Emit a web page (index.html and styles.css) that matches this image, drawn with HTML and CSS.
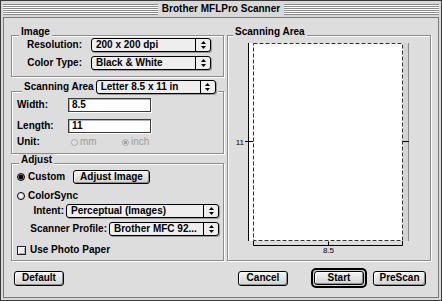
FILE: index.html
```html
<!DOCTYPE html>
<html lang="en">
<head>
    <meta charset="UTF-8">
    <title>Brother MFLPro Scanner</title>
    <link rel="stylesheet" href="styles.css">
</head>
<body>
    <div class="window">
        <div class="titlebar">
            <span class="stripes"></span>
            <span class="title">Brother MFLPro Scanner</span>
            <span class="stripes"></span>
        </div>

        <div class="content">
            <div class="main">
                <div class="left">
                    <!-- Image -->
                    <div class="group image-group">
                        <div class="legend">Image</div>
                        <div class="form-grid">
                            <span class="grid-label">Resolution:</span>
                            <div class="popup w120">
                                <span class="popup-text">200 x 200 dpi</span>
                                <span class="popup-arrows"><svg width="5" height="8" viewBox="0 0 5 8"><polygon points="0,3 2.5,0 5,3"/><polygon points="0,5 2.5,8 5,5"/></svg></span>
                            </div>
                            <span class="grid-label">Color Type:</span>
                            <div class="popup w120">
                                <span class="popup-text">Black &amp; White</span>
                                <span class="popup-arrows"><svg width="5" height="8" viewBox="0 0 5 8"><polygon points="0,3 2.5,0 5,3"/><polygon points="0,5 2.5,8 5,5"/></svg></span>
                            </div>
                        </div>
                    </div>

                    <!-- Scanning Area -->
                    <div class="group area-group">
                        <div class="legend legend-popup">
                            <span>Scanning Area</span>
                            <div class="popup w120">
                                <span class="popup-text">Letter 8.5 x 11 in</span>
                                <span class="popup-arrows"><svg width="5" height="8" viewBox="0 0 5 8"><polygon points="0,3 2.5,0 5,3"/><polygon points="0,5 2.5,8 5,5"/></svg></span>
                            </div>
                        </div>
                        <div class="row size-row">
                            <span class="size-label">Width:</span>
                            <div class="field">8.5</div>
                        </div>
                        <div class="row size-row gap7">
                            <span class="size-label">Length:</span>
                            <div class="field">11</div>
                        </div>
                        <div class="row unit-row">
                            <span class="unit-label">Unit:</span>
                            <span class="unit-opt"><span class="radio small off"></span>mm</span>
                            <span class="unit-opt"><span class="radio small off dot"></span>inch</span>
                        </div>
                    </div>

                    <!-- Adjust -->
                    <div class="group adjust-group">
                        <div class="legend">Adjust</div>
                        <div class="row adj-row1">
                            <span class="opt custom-opt"><span class="radio on"></span>Custom</span>
                            <button class="btn adjust-btn">Adjust Image</button>
                        </div>
                        <div class="row adj-row2">
                            <span class="opt"><span class="radio"></span>ColorSync</span>
                        </div>
                        <div class="row adj-row3">
                            <span class="intent-label">Intent:</span>
                            <div class="popup w153">
                                <span class="popup-text">Perceptual (Images)</span>
                                <span class="popup-arrows"><svg width="5" height="8" viewBox="0 0 5 8"><polygon points="0,3 2.5,0 5,3"/><polygon points="0,5 2.5,8 5,5"/></svg></span>
                            </div>
                        </div>
                        <div class="row adj-row4">
                            <span class="profile-label">Scanner Profile:</span>
                            <div class="popup w110">
                                <span class="popup-text">Brother MFC 92...</span>
                                <span class="popup-arrows"><svg width="5" height="8" viewBox="0 0 5 8"><polygon points="0,3 2.5,0 5,3"/><polygon points="0,5 2.5,8 5,5"/></svg></span>
                            </div>
                        </div>
                        <div class="row adj-row5">
                            <span class="opt"><span class="checkbox"></span>Use Photo Paper</span>
                        </div>
                    </div>
                </div>

                <!-- preview -->
                <div class="group preview-group">
                    <div class="legend">Scanning Area</div>
                    <svg class="preview" width="202" height="224" viewBox="0 0 202 224">
                        <rect x="21" y="7" width="154" height="198" fill="#ffffff"/>
                        <rect x="175" y="7" width="5" height="198" fill="#d4d4d4"/>
                        <line x1="180.5" y1="7" x2="180.5" y2="205" stroke="#8a8a8a"/>
                        <line x1="20.5" y1="7" x2="20.5" y2="205" stroke="#000"/>
                        <rect x="25.5" y="7.5" width="149" height="197" fill="none" stroke="#333" stroke-dasharray="4 2"/>
                        <line x1="17" y1="105.5" x2="25" y2="105.5" stroke="#000"/>
                        <line x1="175" y1="105.5" x2="181" y2="105.5" stroke="#000"/>
                        <text x="16" y="108.5" class="ruler-text" text-anchor="end">11</text>
                        <polyline points="25.5,205 25.5,209.5 174.5,209.5 174.5,205" fill="none" stroke="#000"/>
                        <line x1="100.5" y1="205.5" x2="100.5" y2="209.5" stroke="#000"/>
                        <text x="100.5" y="217" class="ruler-text" text-anchor="middle">8.5</text>
                    </svg>
                </div>
            </div>

            <div class="footer">
                <button class="btn w50">Default</button>
                <button class="btn w50 cancel-btn">Cancel</button>
                <span class="default-ring"><button class="btn w50">Start</button></span>
                <button class="btn w53 prescan-btn">PreScan</button>
            </div>
        </div>
    </div>
</body>
</html>
```

FILE: styles.css
```css
* {
    margin: 0;
    padding: 0;
    box-sizing: border-box;
}
body {
    background: #dddddd;
    font-family: "Liberation Sans", Arial, sans-serif;
    font-size: 10px;
    font-weight: bold;
    line-height: 12px;
    color: #000;
}
.window {
    width: 442px;
    height: 301px;
    border: 1px solid #3a3a3a;
    background: #d8d8d8;
    padding: 0 2px 2px;
    display: flex;
    flex-direction: column;
}
.titlebar {
    height: 16px;
    display: flex;
    align-items: center;
}
.stripes {
    flex: 1;
    height: 11px;
    margin-top: 1px;
    background: repeating-linear-gradient(to bottom, #8a8a8a 0 1px, #ffffff 1px 2px);
}
.title {
    padding: 0 4px;
    white-space: nowrap;
}
.content {
    flex: 1;
    border: 1px solid #7a7a7a;
    background: #dddddd;
}
.main {
    display: flex;
    align-items: stretch;
    gap: 3px;
    padding: 17px 7px 0;
}
.left {
    width: 213px;
    display: flex;
    flex-direction: column;
}

/* etched group box */
.group {
    position: relative;
    border: 1px solid #8c8c8c;
    box-shadow: 1px 1px 0 #ffffff, inset 1px 1px 0 #ffffff;
}
.legend {
    position: absolute;
    top: -10px;
    left: 7px;
    padding: 0 2px;
    background: #dddddd;
    white-space: nowrap;
}
.legend-popup {
    top: -12px;
    left: 10px;
    display: flex;
    align-items: center;
    gap: 2px;
}
.row {
    display: flex;
    align-items: center;
    white-space: nowrap;
}

/* Image */
.image-group {
    padding: 2px 0 6px;
}
.form-grid {
    display: grid;
    grid-template-columns: 70px 120px;
    column-gap: 9px;
    row-gap: 4px;
    align-items: center;
}
.grid-label {
    text-align: right;
}

/* Scanning area */
.area-group {
    margin-top: 14px;
    padding: 6px 5px 6px;
}
.size-row {
    height: 14px;
}
.gap7 {
    margin-top: 7px;
}
.size-label {
    width: 51px;
}
.field {
    width: 83px;
    height: 14px;
    border: 1px solid #3c3c3c;
    background: #ffffff;
    box-shadow: inset 1px 1px 0 #b4b4b4, 1px 1px 0 #ffffff;
    padding-left: 3px;
    line-height: 12px;
}
.unit-row {
    height: 10px;
    margin-top: 4px;
    line-height: 10px;
}
.unit-label {
    width: 54px;
}
.unit-opt {
    width: 51px;
    display: flex;
    align-items: center;
    gap: 2px;
    color: #9a9a9a;
    font-weight: normal;
}

/* Adjust */
.adjust-group {
    margin-top: 9px;
    padding: 6px 4px 4px 5px;
}
.opt {
    display: flex;
    align-items: center;
    gap: 3px;
}
.custom-opt {
    width: 56px;
}
.adj-row1 {
    height: 14px;
}
.adj-row2 {
    height: 12px;
    margin-top: 6px;
}
.adj-row3 {
    height: 14px;
    margin-top: 2px;
}
.intent-label {
    width: 49px;
    padding-right: 2px;
    text-align: right;
}
.adj-row4 {
    height: 14px;
    margin-top: 4px;
}
.profile-label {
    width: 92px;
    padding-right: 2px;
    text-align: right;
}
.adj-row5 {
    height: 12px;
    margin-top: 8px;
}

/* controls */
.popup {
    display: flex;
    align-items: center;
    height: 14px;
    border: 1px solid #000;
    border-radius: 3px;
    background: #eeeeee;
    box-shadow: 1px 1px 0 #9a9a9a;
}
.w120 { width: 120px; }
.w153 { width: 153px; }
.w110 { width: 110px; }
.popup-text {
    flex: 1;
    padding-left: 4px;
    overflow: hidden;
    white-space: nowrap;
}
.popup-arrows {
    width: 15px;
    height: 12px;
    border-left: 1px solid #000;
    display: flex;
    align-items: center;
    justify-content: center;
}
.popup-arrows svg {
    display: block;
    fill: #000;
}
.radio {
    flex: none;
    width: 8px;
    height: 8px;
    border: 1px solid #000;
    border-radius: 50%;
    background: radial-gradient(circle at 40% 40%, #ffffff 0, #d0d0d0 100%);
}
.radio.on {
    background: radial-gradient(circle, #000 0 2px, #9a9a9a 2.6px);
}
.radio.small {
    width: 7px;
    height: 7px;
}
.radio.off {
    border-color: #a8a8a8;
    background: #e2e2e2;
}
.radio.off.dot {
    background: radial-gradient(circle, #a0a0a0 0 1.5px, #e2e2e2 2px);
}
.checkbox {
    flex: none;
    width: 9px;
    height: 9px;
    border: 1px solid #1e1e1e;
    background: #eeeeee;
    box-shadow: inset 1px 1px 0 #ffffff, inset -1px -1px 0 #b0b0b0;
    margin-right: 1px;
}
.btn {
    height: 15px;
    border: 1px solid #000;
    border-radius: 3px;
    background: linear-gradient(#f4f4f4, #d2d2d2);
    box-shadow: inset 1px 1px 0 #ffffff, inset -1px -1px 0 #8e8e8e;
    font: inherit;
    line-height: 12px;
    color: #000;
    padding: 0;
}
.adjust-btn {
    width: 77px;
    height: 14px;
}
.w50 { width: 50px; }
.w53 { width: 53px; }

/* preview */
.preview-group {
    width: 204px;
}
.preview-group .legend {
    left: 5px;
}
.preview {
    display: block;
}
.ruler-text {
    font-family: "Liberation Sans", Arial, sans-serif;
    font-size: 8px;
    font-weight: normal;
    fill: #000;
}

/* footer */
.footer {
    display: flex;
    align-items: center;
    padding: 7px 12px 0 10px;
}
.cancel-btn {
    margin-left: auto;
}
.default-ring {
    display: flex;
    margin-left: 23px;
    padding: 1px;
    border: 2px solid #000;
    border-radius: 5px;
    background: #cfcfcf;
}
.default-ring .btn {
    height: 14px;
}
.prescan-btn {
    margin-left: 6px;
}
```
